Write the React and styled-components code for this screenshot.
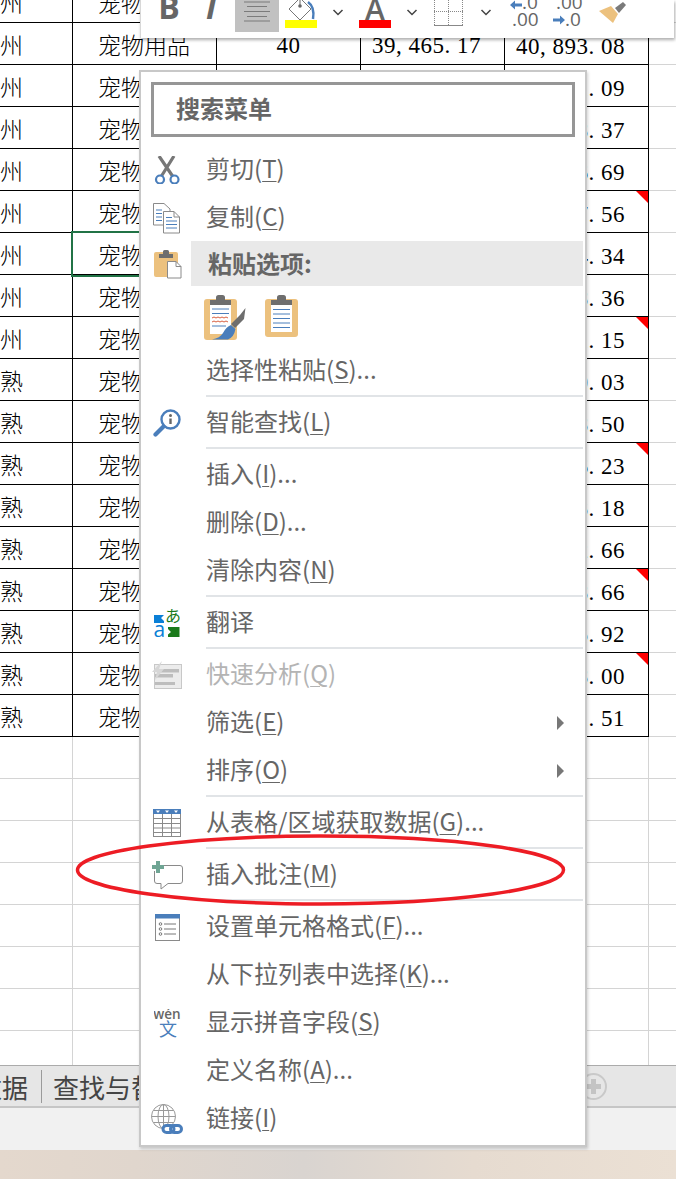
import React from 'react';
import styled, { createGlobalStyle } from 'styled-components';

const Global = createGlobalStyle`
  html, body { margin: 0; padding: 0; background: #fff; overflow: hidden; }
  * { box-sizing: border-box; }
`;

const Page = styled.div`
  position: relative; width: 676px; height: 1179px; overflow: hidden;
  display: flex; flex-direction: column;
  font-family: "Noto Sans CJK SC", "Noto Sans", sans-serif;
`;
const Sheet = styled.div`
  height: 1065px; overflow: hidden; flex: none; isolation: isolate;
  font-family: "Liberation Serif", "Noto Sans CJK SC", serif;
  font-size: 23px; color: #000; letter-spacing: .5px;
`;
const SheetInner = styled.div`
  margin: -19px 0 0 -71px; width: 800px;
`;
const Row = styled.div`
  display: grid; grid-template-columns: repeat(5, 144px) 80px; height: 42px;
`;
const Cell = styled.div`
  position: relative; height: 42px; line-height: 44px; white-space: nowrap;
  border-right: 1px solid ${p => (p.$ink ? '#000' : '#d4d4d4')};
  border-bottom: 1px solid ${p => (p.$ink ? '#000' : '#d4d4d4')};
  text-align: ${p => p.$align || 'left'};
  padding: ${p => p.$pad || '0'};
  ${p => p.$active && 'outline: 2px solid #217346; outline-offset: 0; z-index: 1;'}
  ${p => p.$note && `
    &::after {
      content: ''; position: absolute; top: 0; right: 0;
      border-top: 12px solid #f00; border-left: 12px solid transparent;
    }
  `}
`;
const Filler = styled.div`
  height: 42px; border-bottom: 1px solid #d4d4d4;
`;
const CjkThin = styled.span`
  font-family: "Noto Sans CJK SC", sans-serif; font-weight: 300; font-size: 23px; letter-spacing: 0;
  line-height: 42px;
`;

const TabBar = styled.div`
  height: 43px; flex: none; display: flex; align-items: center; overflow: hidden;
  background: #e6e6e6; border-top: 1px solid #ababab; border-bottom: 2px solid #c6c6c6;
  font-size: 26px; color: #444;
`;
const SheetTab = styled.div`
  flex: none; line-height: 33px; height: 33px; white-space: nowrap;
  padding: 0 13px 0 11px;
  margin-left: ${p => p.$offset || '0'};
  border-right: ${p => (p.$sep ? '1px solid #9a9a9a' : 'none')};
`;
const AddSheet = styled.svg`
  margin-left: auto; margin-right: 69px; flex: none;
`;
const StatusBar = styled.div`
  height: 42px; flex: none; background: #f1f1f1;
`;
const Wallpaper = styled.div`
  flex: 1; background: linear-gradient(90deg, #e4d8cd 0%, #e0d6cd 20%, #d9d4d0 45%, #e6dbd0 70%, #ebe0d4 100%);
`;

const Toolbar = styled.div`
  position: absolute; left: 140px; top: 0; width: 534px; height: 38px; z-index: 2;
  background: #fff; border-left: 1px solid #d8d8d8;
  box-shadow: 1px 2px 3px rgba(0,0,0,.32);
  display: flex; padding-left: 11px; overflow: hidden;
  color: #666;
`;
const ToolSlot = styled.div`
  flex: none; width: ${p => p.$w || 44}px; height: ${p => (p.$on ? '32px' : '38px')};
  background: ${p => (p.$on ? '#c1c1c1' : 'transparent')};
  display: flex; justify-content: center;
`;
const ToolText = styled.text`
  font-family: "Open Sans", "Noto Sans", sans-serif;
  font-weight: ${p => p.$weight || 400};
  font-style: ${p => (p.$italic ? 'italic' : 'normal')};
  fill: #666;
`;

const Menu = styled.div`
  position: absolute; left: 139px; top: 70px; width: 448px; height: 1077px; z-index: 2;
  background: #fff; border: 2px solid #c8c8c8;
  box-shadow: 1px 2px 3px rgba(0,0,0,.18);
  padding: 10px 2px 0 10px;
  font-size: 24px; color: #666; line-height: 48px;
`;
const SearchBox = styled.div`
  height: 55px; margin: 0 8px 9px 0; border: 3px solid #969696;
  padding-left: 22px; line-height: 45px; font-weight: 700; color: #666;
`;
const Item = styled.div`
  height: 48px; display: flex; align-items: center; white-space: nowrap;
  color: ${p => (p.$off ? '#b4b4b4' : '#666')};
  u { text-underline-offset: 3px; text-decoration-thickness: 1px; }
`;
const ItemLabel = styled.span`
  line-height: 44px; height: 44px; margin-top: -4px;
`;
const IconSlot = styled.div`
  flex: none; width: 32px; height: 32px; margin-right: ${p => p.$gap ?? 23}px;
  display: flex; align-items: center; justify-content: center;
  svg { display: block; flex: none; }
`;
const SubArrow = styled.i`
  margin-left: auto; margin-right: 19px; flex: none;
  border-left: 7px solid #777; border-top: 7px solid transparent; border-bottom: 7px solid transparent;
`;
const Divider = styled.div`
  height: 4px; margin-left: 55px; border-top: 2px solid #e1e4e7;
`;
const PasteHead = styled.div`
  height: 45px; margin-top: -1px; display: flex; align-items: center;
`;
const PasteLabel = styled.div`
  flex: 1; height: 45px; margin-left: 8px; background: #e9e9e9;
  padding-left: 17px; line-height: 43px; font-weight: 700;
`;
const PasteChoices = styled.div`
  height: 61px; padding: 9px 0 0 53px; display: flex; gap: 19px; align-items: flex-start;
`;
const Scribble = styled.svg`
  position: absolute; left: 0; top: 0; z-index: 3; pointer-events: none;
`;

const blue = '#4a7ebb', gray = '#8a8a8a', tan = '#ecc17e', dark = '#6e6e6e';

const Scissors = () => (
  <svg width="26" height="28" viewBox="0 0 26 28">
    <path d="M5 0 L18.500 20 M20 0 L7.500 20" stroke="#777" strokeWidth="3.200" fill="none" />
    <circle cx="6" cy="23.500" r="4" fill="#fff" stroke={blue} strokeWidth="2.200" />
    <circle cx="20.500" cy="23.500" r="4" fill="#fff" stroke={blue} strokeWidth="2.200" />
  </svg>
);
const Copy = () => (
  <svg width="28" height="31" viewBox="0 0 28 31">
    <path d="M.5.5H11L17 6V22H.5Z" fill="#fff" stroke={gray} />
    <path d="M3 7H9M3 10.500H9M3 14H9M3 17.500H9" stroke={blue} />
    <path d="M10.500 8.500H21L26.500 14V30H10.500Z" fill="#fff" stroke={gray} />
    <path d="M21 8.500V14H26.500" fill="none" stroke={gray} />
    <path d="M13 14.500H19M13 18H24M13 21.500H24M13 25H24" stroke={blue} />
  </svg>
);
const PasteBoard = () => (
  <svg width="29" height="30" viewBox="0 0 29 30">
    <rect x="1" y="3" width="24" height="25" rx="2" fill={tan} />
    <path d="M6 9V5H10V2.500Q10 1 11.500 1H14.500Q16 1 16 2.500V5H20V9Z" fill={dark} />
    <path d="M14.500 12.500H23L28 17.500V29H14.500Z" fill="#fff" stroke={gray} />
    <path d="M23 12.500V17.500H28" fill="none" stroke={gray} />
  </svg>
);
const PasteFormat = () => (
  <svg width="42" height="45" viewBox="0 0 42 45">
    <rect x="0" y="4" width="33" height="41" rx="3" fill={tan} />
    <rect x="6" y="8" width="21" height="31" fill="#fff" />
    <path d="M6 10V5H12V2.500Q12 0 14.500 0H18.500Q21 0 21 2.500V5H27V10Z" fill={dark} />
    <path d="M8 14H25M8 18.500H25M8 31H22" stroke={blue} />
    <path d="M8 23l2-1 2 1 2-1 2 1 2-1 2 1 2-1 2 1M8 27l2-1 2 1 2-1 2 1 2-1 2 1 2-1 2 1" stroke="#d9603f" fill="none" />
    <path d="M41.500 13L40 24 31 33 27 29 36 20Z" fill={dark} />
    <path d="M27 30L31.500 34Q30 42 24 44.500H8Q16 43 19 38Q22 32 27 30Z" fill={blue} />
  </svg>
);
const PastePlain = () => (
  <svg width="33" height="42" viewBox="0 0 33 42">
    <rect x="0" y="4" width="33" height="38" rx="3" fill={tan} />
    <rect x="6" y="8" width="21" height="29" fill="#fff" />
    <path d="M6 10V5H12V2.500Q12 0 14.500 0H18.500Q21 0 21 2.500V5H27V10Z" fill={dark} />
    <path d="M8 14.500H25M8 19H25M8 23.500H25M8 28H25M8 32.500H25" stroke={blue} />
  </svg>
);
const Lookup = () => (
  <svg width="29" height="28" viewBox="0 0 29 28">
    <circle cx="17.500" cy="10.500" r="9" fill="#fff" stroke={blue} strokeWidth="2.400" />
    <path d="M10.500 17.500L2.500 25.500" stroke={blue} strokeWidth="4.200" strokeLinecap="round" />
    <circle cx="17.500" cy="6.500" r="1.500" fill="#666" />
    <path d="M17.500 9.500V15" stroke="#666" strokeWidth="2.400" />
  </svg>
);
const Translate = () => (
  <svg width="26" height="28" viewBox="0 0 26 28">
    <text x="11" y="13" fontSize="16" fill="#1a7a1a" fontFamily="Noto Sans CJK JP, sans-serif">あ</text>
    <path d="M0 6H10L7 9 10 12V14H0Z" fill="#0a7fd6" />
    <text x="-.5" y="28" fontSize="21" fill="#0a7fd6" fontFamily="Open Sans, sans-serif">a</text>
    <path d="M25.500 28H14V25.500L17 23 14 20V18H25.500Z" fill="#1a7a1a" />
  </svg>
);
const Quick = () => (
  <svg width="30" height="28" viewBox="0 0 30 28">
    <rect x="2.500" y="3.500" width="27" height="24" fill="#ececec" stroke="#c8c8c8" />
    <path d="M9 8H27V11.500H9ZM3 13H21V16.500H3ZM3 21H23V24H3Z" fill="#bdbdbd" />
    <path d="M10 0L0 11H5L3 19 12 8H7Z" fill="#d6d6d6" />
  </svg>
);
const TableIcon = () => (
  <svg width="28" height="28" viewBox="0 0 28 28">
    <rect x=".5" y=".5" width="27" height="27" fill="#fff" stroke={gray} />
    <rect width="28" height="5" fill={blue} />
    <path d="M3 1.500H7L5 4ZM12 1.500H16L14 4ZM21 1.500H25L23 4Z" fill="#fff" />
    <path d="M0 9.500H28M0 14.500H28M0 19H28M0 23.500H28M9.500 5V28M18.500 5V28" stroke={gray} />
  </svg>
);
const Comment = () => (
  <svg width="31" height="29" viewBox="0 0 31 29">
    <path d="M8 4.500H28Q30.500 4.500 30.500 7V20Q30.500 22.500 28 22.500H16L9 28V22.500H5Q2.500 22.500 2.500 20V10" fill="#fff" stroke="#8a8a8a" />
    <path d="M4 0H8V4H12V8H8V12H4V8H0V4H4Z" fill="#6fa594" />
  </svg>
);
const FormatCells = () => (
  <svg width="25" height="27" viewBox="0 0 25 27">
    <rect x=".5" y=".5" width="24" height="26" fill="#fff" stroke={gray} />
    <rect width="25" height="4.500" fill={blue} />
    <circle cx="5.500" cy="10" r="1.300" fill="none" stroke="#777" />
    <circle cx="5.500" cy="15" r="1.300" fill="none" stroke="#777" />
    <circle cx="5.500" cy="20" r="1.300" fill="none" stroke="#777" />
    <path d="M9 10H21M9 15H21M9 20H21" stroke="#777" />
  </svg>
);
const Pinyin = () => (
  <svg width="27" height="29" viewBox="0 0 27 29">
    <text x="13" y="10" textAnchor="middle" fontSize="13.500" fontWeight="600" fill="#666" fontFamily="Open Sans, sans-serif">wén</text>
    <text x="14" y="27" textAnchor="middle" fontSize="18" fill={blue} fontFamily="Noto Sans CJK SC, sans-serif">文</text>
  </svg>
);
const Globe = () => (
  <svg width="32" height="30" viewBox="0 0 32 30">
    <g fill="none" stroke="#999">
      <circle cx="12.500" cy="12.500" r="12" />
      <ellipse cx="12.500" cy="12.500" rx="5.500" ry="12" />
      <path d="M12.500 .5V24.500M.5 12.500H24.500M2.500 6.500H22.500M2.500 18.500H22.500" />
    </g>
    <g fill="none" stroke={blue} strokeWidth="3">
      <rect x="12" y="21.500" width="11" height="7" rx="3.500" fill="#fff" />
      <rect x="19.500" y="21.500" width="11" height="7" rx="3.500" />
    </g>
  </svg>
);

const Chevron = () => (
  <svg width="12" height="38" viewBox="0 0 12 38">
    <path d="M1.500 10L6 14.500 10.500 10" fill="none" stroke="#444" strokeWidth="1.500" />
  </svg>
);

const items = [
  { label: '剪切', key: 'T', icon: <Scissors /> },
  { label: '复制', key: 'C', icon: <Copy /> },
  { paste: true },
  { label: '选择性粘贴', key: 'S', tail: '...', rule: true },
  { label: '智能查找', key: 'L', icon: <Lookup />, rule: true },
  { label: '插入', key: 'I', tail: '...' },
  { label: '删除', key: 'D', tail: '...' },
  { label: '清除内容', key: 'N', rule: true },
  { plain: '翻译', icon: <Translate />, rule: true },
  { label: '快速分析', key: 'Q', icon: <Quick />, off: true },
  { label: '筛选', key: 'E', sub: true },
  { label: '排序', key: 'O', sub: true, rule: true },
  { label: '从表格/区域获取数据', key: 'G', tail: '...', icon: <TableIcon />, rule: true },
  { label: '插入批注', key: 'M', icon: <Comment />, rule: true },
  { label: '设置单元格格式', key: 'F', tail: '...', icon: <FormatCells /> },
  { label: '从下拉列表中选择', key: 'K', tail: '...' },
  { label: '显示拼音字段', key: 'S', icon: <Pinyin /> },
  { label: '定义名称', key: 'A', tail: '...' },
  { label: '链接', key: 'I', icon: <Globe /> },
];

const last = ['', '40, 893. 08', '41, 321. 09', '39, 118. 37', '40, 226. 69', '41, 007. 56', '38, 654. 34', '39, 208. 36', '40, 771. 15',
  '39, 450. 03', '40, 118. 50', '41, 236. 23', '39, 903. 18', '40, 562. 66', '38, 218. 66', '41, 125. 92', '39, 348. 00', '40, 671. 51'];
const notes = new Set([5, 8, 11, 14, 16]);

export default function App() {
  return (
    <Page>
      <Global />
      <Sheet>
        <SheetInner>
          {last.map((value, i) => (
            <Row key={i}>
              <Cell $ink $pad="0 0 0 48px"><CjkThin>{i < 9 ? '苏州' : '常熟'}</CjkThin></Cell>
              <Cell $ink $active={i === 6} $pad="0 0 0 25px"><CjkThin>宠物用品</CjkThin></Cell>
              <Cell $ink $align="center" $pad="1px 0 0 0">{i === 1 ? '40' : ''}</Cell>
              <Cell $ink $align="right" $pad="1px 23px 0 0">{i === 1 ? '39, 465. 17' : ''}</Cell>
              <Cell $ink $align="right" $pad="2px 23px 0 0" $note={notes.has(i)}>{value}</Cell>
              <Filler />
            </Row>
          ))}
          {Array.from({ length: 8 }, (_, i) => (
            <Row key={i}>
              <Cell /><Cell /><Cell /><Cell /><Cell /><Filler />
            </Row>
          ))}
        </SheetInner>
      </Sheet>
      <TabBar>
        <SheetTab $offset="-35px" $sep>数据</SheetTab>
        <SheetTab>查找与替换</SheetTab>
        <AddSheet width="27" height="27" viewBox="0 0 27 27">
          <circle cx="13.500" cy="13.500" r="12.500" fill="none" stroke="#c9c9c9" strokeWidth="2" />
          <path d="M13.500 6V21M6 13.500H21" stroke="#c4c4c4" strokeWidth="5" />
        </AddSheet>
      </TabBar>
      <StatusBar />
      <Wallpaper />

      <Toolbar>
        <ToolSlot $w={34}>
          <svg width="34" height="38"><ToolText x="17" y="19" textAnchor="middle" fontSize="32" $weight={700}>B</ToolText></svg>
        </ToolSlot>
        <ToolSlot $w={49}>
          <svg width="49" height="38"><ToolText x="25" y="19" textAnchor="middle" fontSize="32" $weight={700} $italic>I</ToolText></svg>
        </ToolSlot>
        <ToolSlot $on>
          <svg width="44" height="32">
            <path d="M9 2H35M12 6.500H32M9 11.500H35M12 16.500H32M9 21H35" stroke="#7b7b7b" strokeWidth="1.200" />
          </svg>
        </ToolSlot>
        <ToolSlot>
          <svg width="44" height="38">
            <path d="M21 -2L32 9 21 20 10 9Z" fill="#fff" stroke="#777" />
            <circle cx="21" cy="6" r="1.800" fill="#666" />
            <path d="M21 0V6" stroke="#666" />
            <path d="M29 2Q36 7 34 19" fill="none" stroke={blue} strokeWidth="2.500" />
            <rect x="6" y="20" width="32" height="8" fill="#ff0" />
          </svg>
        </ToolSlot>
        <ToolSlot $w={30}><Chevron /></ToolSlot>
        <ToolSlot>
          <svg width="44" height="38">
            <ToolText x="22" y="20" textAnchor="middle" fontSize="30" $weight={600}>A</ToolText>
            <rect x="6" y="20" width="32" height="8" fill="#f00" />
          </svg>
        </ToolSlot>
        <ToolSlot $w={30}><Chevron /></ToolSlot>
        <ToolSlot>
          <svg width="44" height="38">
            <path d="M7.500 -2V25M21.500 -2V25M35.500 -2V25M7 11.500H36" stroke="#888" strokeDasharray="1 1" />
            <path d="M7 25.500H36" stroke="#888" />
          </svg>
        </ToolSlot>
        <ToolSlot $w={30}><Chevron /></ToolSlot>
        <ToolSlot>
          <svg width="44" height="38">
            <path d="M9 5L14 0.500V3.500H21V6.500H14V9.500Z" fill={blue} />
            <ToolText x="21" y="9" fontSize="19">.0</ToolText>
            <ToolText x="11" y="26" fontSize="19">.00</ToolText>
          </svg>
        </ToolSlot>
        <ToolSlot>
          <svg width="44" height="38">
            <ToolText x="11" y="9" fontSize="19">.00</ToolText>
            <path d="M20 20L15 15.500V18.500H8V21.500H15V24.500Z" fill={blue} />
            <ToolText x="20" y="26" fontSize="19">.0</ToolText>
          </svg>
        </ToolSlot>
        <ToolSlot>
          <svg width="44" height="38">
            <path d="M10 11L22 6 29 14 24 23Z" fill={tan} />
            <path d="M26 8L34 2 37 5 30 13Z" fill="#7a7a7a" />
          </svg>
        </ToolSlot>
      </Toolbar>

      <Menu>
        <SearchBox>搜索菜单</SearchBox>
        {items.map((it, i) => {
          if (it.paste) {
            return (
              <React.Fragment key={i}>
                <PasteHead>
                  <IconSlot $gap={0}><PasteBoard /></IconSlot>
                  <PasteLabel>粘贴选项:</PasteLabel>
                </PasteHead>
                <PasteChoices><PasteFormat /><PastePlain /></PasteChoices>
              </React.Fragment>
            );
          }
          return (
            <React.Fragment key={i}>
              <Item $off={it.off}>
                <IconSlot>{it.icon}</IconSlot>
                {it.plain
                  ? <ItemLabel>{it.plain}</ItemLabel>
                  : <ItemLabel>{it.label}(<u>{it.key}</u>){it.tail}</ItemLabel>}
                {it.sub && <SubArrow />}
              </Item>
              {it.rule && <Divider />}
            </React.Fragment>
          );
        })}
      </Menu>

      <Scribble width="676" height="1179" viewBox="0 0 676 1179">
        <ellipse cx="320.500" cy="870" rx="243" ry="34" fill="none" stroke="#ed1c24" strokeWidth="3.500" />
      </Scribble>
    </Page>
  );
}
